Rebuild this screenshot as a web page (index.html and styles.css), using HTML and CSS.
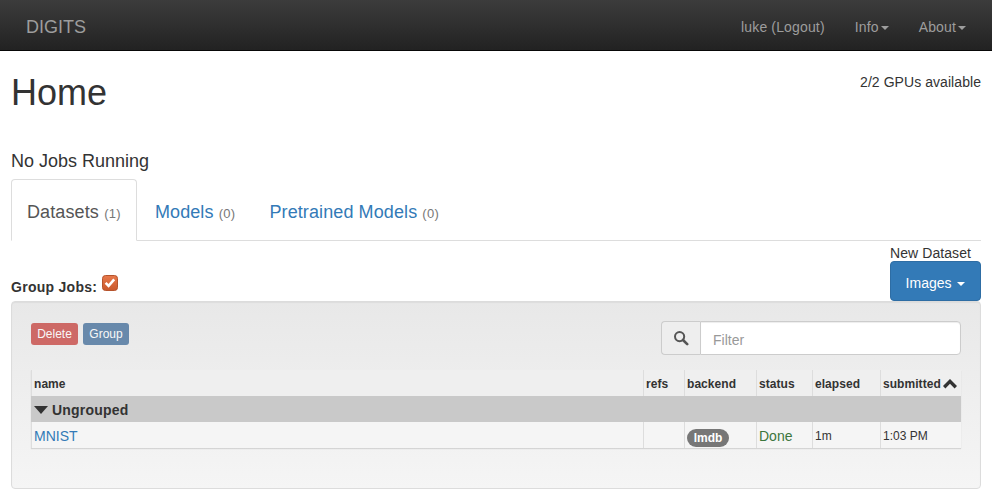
FILE: index.html
```html
<!DOCTYPE html>
<html lang="en">
<head>
<meta charset="utf-8">
<title>DIGITS</title>
<link rel="stylesheet" href="styles.css">
</head>
<body>
<nav class="navbar">
  <a class="brand">DIGITS</a>
  <div class="nav-right">
    <a>luke (Logout)</a>
    <a>Info<span class="caret"></span></a>
    <a>About<span class="caret"></span></a>
  </div>
</nav>
<main class="container">
  <header class="page-head">
    <h1>Home</h1>
    <span class="gpus">2/2 GPUs available</span>
  </header>
  <h4 class="running">No Jobs Running</h4>
  <ul class="tabs">
    <li class="tab active">Datasets <small>(1)</small></li>
    <li class="tab">Models <small>(0)</small></li>
    <li class="tab">Pretrained Models <small>(0)</small></li>
  </ul>
  <div class="toolbar">
    <div class="group-jobs">
      <b>Group Jobs:</b>
      <svg class="check" width="16" height="16" viewBox="0 0 16 16" aria-hidden="true">
        <defs>
          <linearGradient id="checkFill" x1="0" y1="0" x2="0" y2="1">
            <stop offset="0" stop-color="#e8794b"/>
            <stop offset="1" stop-color="#c9582c"/>
          </linearGradient>
        </defs>
        <rect x="0.5" y="0.5" width="15" height="15" rx="3" fill="url(#checkFill)" stroke="#b5532c"/>
        <path d="M3.6 7.8l3 3 5.6-6.4" fill="none" stroke="#fff" stroke-width="2.6"/>
      </svg>
    </div>
    <div class="new-dataset">
      <span class="new-label">New Dataset</span>
      <button class="btn-images">Images <span class="caret caret-white"></span></button>
    </div>
  </div>
  <section class="well">
    <div class="controls">
      <div class="actions">
        <button class="btn-xs btn-delete">Delete</button>
        <button class="btn-xs btn-group">Group</button>
      </div>
      <div class="filter">
        <span class="addon">
          <svg width="16" height="16" viewBox="0 0 16 16" aria-hidden="true">
            <circle cx="6.6" cy="6.6" r="4.6" fill="none" stroke="#555" stroke-width="2"/>
            <path d="M10 10l4.2 4.2" stroke="#555" stroke-width="2.6" stroke-linecap="round"/>
          </svg>
        </span>
        <span class="filter-input">Filter</span>
      </div>
    </div>
    <table class="jobs">
      <colgroup>
        <col class="c-name"><col class="c-refs"><col class="c-backend"><col class="c-status"><col class="c-elapsed"><col class="c-submitted">
      </colgroup>
      <thead>
        <tr>
          <th>name</th><th>refs</th><th>backend</th><th>status</th><th>elapsed</th>
          <th>submitted<svg class="sort" width="14" height="10" viewBox="0 0 14 10" aria-hidden="true"><path d="M1.2 8.2L7 2.4l5.8 5.8" fill="none" stroke="#333" stroke-width="3.4"/></svg></th>
        </tr>
      </thead>
      <tbody>
        <tr class="group-row">
          <td colspan="6"><span class="tri"></span>Ungrouped</td>
        </tr>
        <tr class="job-row">
          <td class="job-name"><a>MNIST</a></td>
          <td></td>
          <td><span class="badge">lmdb</span></td>
          <td class="done">Done</td>
          <td class="small">1m</td>
          <td class="small">1:03 PM</td>
        </tr>
      </tbody>
    </table>
  </section>
</main>
</body>
</html>
```
FILE: styles.css
```css
* { box-sizing: border-box; }
html, body { margin: 0; padding: 0; }
body {
  font-family: "Liberation Sans", Arial, sans-serif;
  font-size: 14px;
  line-height: 20px;
  color: #333;
  background: #fff;
  overflow: hidden;
}
.navbar {
  height: 51px;
  display: flex;
  justify-content: space-between;
  align-items: center;
  background: linear-gradient(to bottom, #3c3c3c, #222);
  border-bottom: 1px solid #080808;
  padding: 3px 11px 0 26px;
  color: #9d9d9d;
}
.brand { font-size: 18px; }
.nav-right { display: flex; letter-spacing: .15px; }
.nav-right a { padding: 0 15px; white-space: nowrap; }
.caret {
  display: inline-block;
  width: 0;
  height: 0;
  margin-left: 2px;
  vertical-align: middle;
  border-top: 4px solid currentColor;
  border-left: 4px solid transparent;
  border-right: 4px solid transparent;
}
.caret-white { color: #fff; margin-left: 2px; }
.container { padding: 0 11px; }
.page-head {
  display: flex;
  justify-content: space-between;
  align-items: flex-start;
  height: 100px;
}
h1 {
  margin: 22px 0 0;
  font-size: 36px;
  font-weight: 500;
  line-height: 40px;
}
.gpus { margin-top: 21px; letter-spacing: .06px; }
.running {
  margin: 0;
  font-size: 18px;
  font-weight: 500;
  line-height: 20px;
}
.tabs {
  display: flex;
  list-style: none;
  margin: 8px 0 0;
  padding: 0;
  height: 62px;
  border-bottom: 1px solid #ddd;
}
.tab {
  height: 62px;
  padding: 19px 15px 0;
  margin-right: 2px;
  font-size: 18px;
  line-height: 26px;
  color: #337ab7;
  border: 1px solid transparent;
  border-radius: 4px 4px 0 0;
  letter-spacing: .1px;
}
.tab small { font-size: 13px; color: #777; letter-spacing: .3px; }
.tab.active {
  color: #555;
  background: #fff;
  border-color: #ddd;
  border-bottom-color: #fff;
  letter-spacing: .12px;
}
.toolbar {
  display: flex;
  justify-content: space-between;
  align-items: flex-end;
  height: 60px;
}
.group-jobs { display: flex; align-items: center; margin-bottom: 6px; }
.group-jobs b { line-height: 20px; position: relative; top: 2px; letter-spacing: .27px; }
.check { margin: -5px 0 0 5px; }
.new-dataset { display: flex; flex-direction: column; position: relative; z-index: 1; height: 60px; }
.new-label { height: 20px; line-height: 24px; letter-spacing: .08px; }
.btn-images {
  width: 91px;
  height: 40px;
  border: 1px solid #2e6da4;
  border-radius: 4px;
  background: #337ab7;
  color: #fff;
  font: 14px/20px "Liberation Sans", Arial, sans-serif;
  padding: 3px 0 0;
}
.well {
  height: 188px;
  padding: 19px;
  background: linear-gradient(to bottom, #e8e8e8, #f5f5f5);
  border: 1px solid #dcdcdc;
  border-radius: 4px;
  box-shadow: inset 0 1px 1px rgba(0,0,0,.05);
}
.controls {
  display: flex;
  justify-content: space-between;
  align-items: flex-start;
  height: 49px;
}
.actions { display: flex; gap: 5px; margin-top: 2px; }
.btn-xs {
  height: 22px;
  padding: 1px 5px;
  border: 1px solid transparent;
  border-radius: 3px;
  color: #fff;
  font: 12px/18px "Liberation Sans", Arial, sans-serif;
  opacity: .65;
}
.btn-delete { background: #bf2520; width: 47px; padding: 0; }
.btn-group { background: #23568a; width: 46px; padding: 0; }
.filter { display: flex; width: 300px; height: 34px; }
.addon {
  width: 39px;
  display: flex;
  align-items: center;
  justify-content: center;
  background: #eee;
  border: 1px solid #ccc;
  border-right: 0;
  border-radius: 4px 0 0 4px;
}
.filter-input {
  flex: 1;
  padding: 8px 12px 6px;
  background: #fff;
  border: 1px solid #ccc;
  border-radius: 0 4px 4px 0;
  color: #999;
  box-shadow: inset 0 1px 1px rgba(0,0,0,.075);
}
.jobs {
  width: 930px;
  table-layout: fixed;
  border-collapse: separate;
  border-spacing: 0;
  box-shadow: 0 1px 1px rgba(0,0,0,.12);
}
.c-name { width: 612px; }
.c-refs { width: 41px; }
.c-backend { width: 72px; }
.c-status { width: 56px; }
.c-elapsed { width: 68px; }
.c-submitted { width: 81px; }
.jobs th {
  height: 26px;
  padding: 2px 2px 0;
  font-size: 12px;
  line-height: 14px;
  text-align: left;
  background: #efefef;
  border-left: 1px solid #ddd;
  white-space: nowrap;
  letter-spacing: .05px;
}
.sort { margin-left: 2px; vertical-align: -1px; }
.group-row td {
  height: 26px;
  padding: 2px 3px 0;
  background: #c9c9c9;
  font-size: 14px;
  font-weight: 700;
  letter-spacing: .2px;
}
.tri {
  display: inline-block;
  width: 0;
  height: 0;
  margin-right: 4px;
  vertical-align: 1px;
  border-top: 8px solid #333;
  border-left: 7px solid transparent;
  border-right: 7px solid transparent;
}
.job-row td {
  height: 26px;
  padding: 1px 2px 0;
  background: #f5f5f5;
  border-left: 1px solid #ddd;
}
.job-name a { color: #337ab7; }
.small { font-size: 12px; }
.done { color: #3c763d; }
.badge {
  display: inline-block;
  width: 42px;
  padding: 3px 0;
  text-align: center;
  background: #777;
  color: #fff;
  border-radius: 10px;
  font-size: 12px;
  font-weight: 700;
  line-height: 12px;
  vertical-align: -3px;
}
```
